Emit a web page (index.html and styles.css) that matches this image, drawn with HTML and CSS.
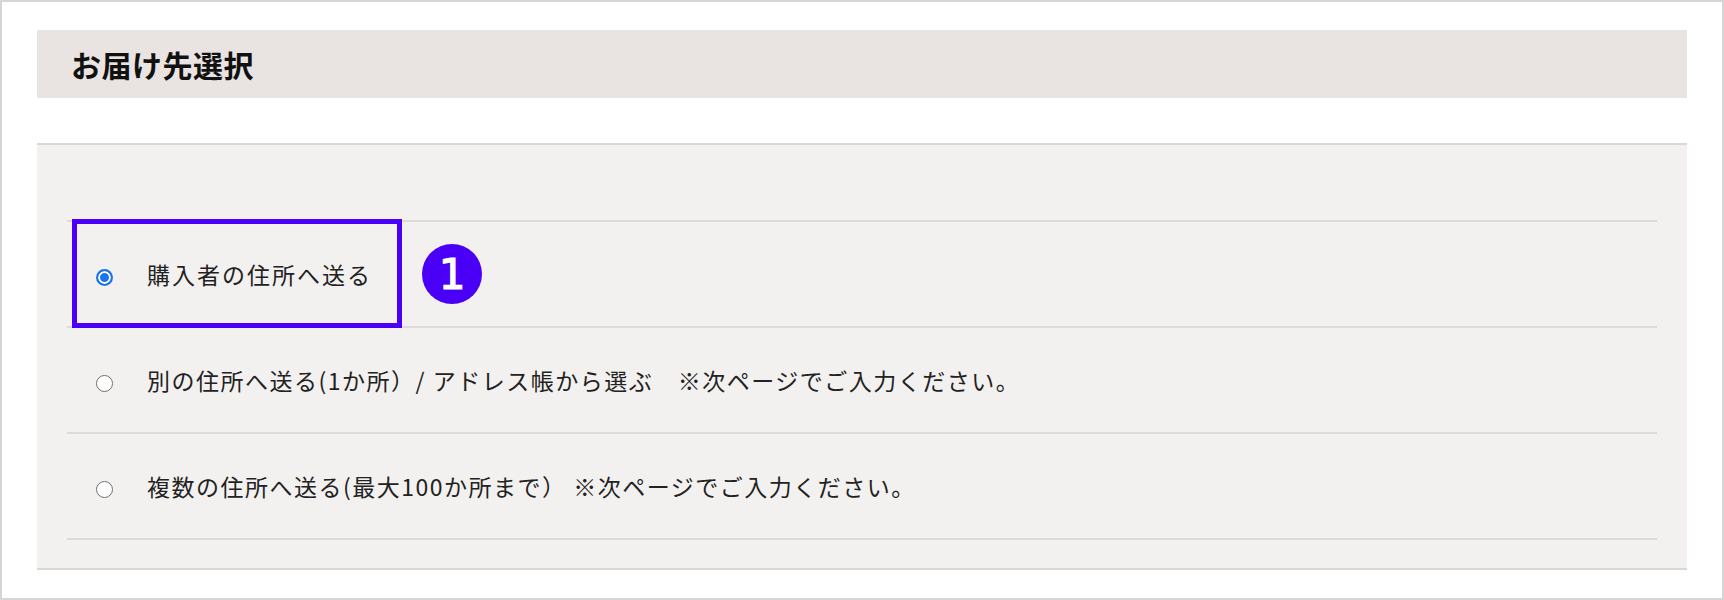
FILE: index.html
```html
<!DOCTYPE html>
<html lang="ja">
  <head>
    <meta charset="UTF-8" />
    <meta name="viewport" content="width=device-width, initial-scale=1.0" />
    <title>お届け先選択</title>
    <link rel="stylesheet" href="styles.css">
  </head>
  <body>
    <div class="frame">
      <h2 class="head">お届け先選択</h2>

      <!-- 送付先リスト -->
      <div class="panel">
        <ul class="options">
          <li class="option">
            <input type="radio" name="dest" checked />
            <span class="label first">購入者の住所へ送る</span>
            <span class="mark"></span>
            <span class="badge">1</span>
          </li>
          <li class="option">
            <input type="radio" name="dest" />
            <span class="label">別の住所へ送る(1か所）/ アドレス帳から選ぶ　※次ページでご入力ください。</span>
          </li>
          <li class="option">
            <input type="radio" name="dest" />
            <span class="label">複数の住所へ送る(最大100か所まで） ※次ページでご入力ください。</span>
          </li>
        </ul>
      </div>
    </div>
  </body>
</html>
```

FILE: styles.css
```css
* {
  margin: 0;
  padding: 0;
  box-sizing: border-box;
}

body {
  font-family: "Noto Sans CJK JP", "Noto Sans", sans-serif;
  background-color: #fff;
  color: #222;
}

.frame {
  height: 600px;
  border: 2px solid #d5d5d5;
  padding: 28px 35px 0 35px;
}

.head {
  height: 68px;
  display: flex;
  align-items: center;
  padding-left: 34px;
  background-color: #e9e4e1;
  font-size: 30px;
  font-weight: 700;
  letter-spacing: 0.5px;
  color: #111;
}

.panel {
  margin-top: 45px;
  padding: 75px 30px 28px 30px;
  background-color: #f3f1ef;
  border-top: 2px solid #dbd7d4;
  border-bottom: 2px solid #dbd7d4;
}

.options {
  list-style: none;
  border-top: 2px solid #dedad7;
}

.option {
  position: relative;
  height: 106px;
  display: flex;
  align-items: center;
  padding-left: 29px;
  border-bottom: 2px solid #dedad7;
}

.option input {
  appearance: none;
  width: 17px;
  height: 17px;
  margin-top: 6px;
  margin-right: 34px;
  border: 1px solid #6f6f6f;
  border-radius: 50%;
  background-color: #fff;
  flex-shrink: 0;
}

.option input:checked {
  border: 2px solid #1a73e8;
  box-shadow: inset 0 0 0 2px #fff;
  background-color: #1a73e8;
}

.label {
  font-size: 23px;
  letter-spacing: 1.5px;
  white-space: pre;
}

.label.first {
  letter-spacing: 2px;
}

/* 注釈の枠と番号 */
.mark {
  position: absolute;
  left: 5px;
  top: -3px;
  width: 330px;
  height: 109px;
  border: 5px solid #4a00f6;
}

.badge {
  position: absolute;
  left: 355px;
  top: 22px;
  width: 60px;
  height: 60px;
  border-radius: 50%;
  background-color: #4a00f6;
  color: #fff;
  font-family: "DejaVu Sans", sans-serif;
  font-size: 42px;
  font-weight: 400;
  -webkit-text-stroke: 1.2px #fff;
  display: flex;
  align-items: center;
  justify-content: center;
}
```
